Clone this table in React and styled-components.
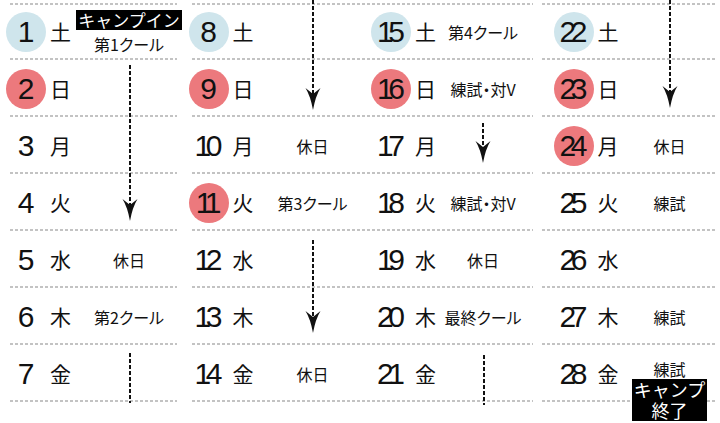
import styled, { createGlobalStyle } from 'styled-components'

const GlobalStyle = createGlobalStyle`
	html, body {
		margin: 0;
		padding: 0;
		background: #fff;
	}
	body {
		width: 720px;
		height: 423px;
		overflow: hidden;
		font-family: "Noto Sans CJK JP", "Noto Sans", sans-serif;
		color: #111;
	}
`

/* data */
const weeks = [
	{
		lines: [10, 5.5],
		center: 129,
		arrows: [
			{ x: 130, top: 65, h: 156, head: true },
			{ x: 130, top: 353, h: 50 },
		],
		days: [
			{ n: 1, w: '土', tone: 'sat', tag: 'キャンプイン', note: '第1クール' },
			{ n: 2, w: '日', tone: 'sun' },
			{ n: 3, w: '月' },
			{ n: 4, w: '火' },
			{ n: 5, w: '水', note: '休日' },
			{ n: 6, w: '木', note: '第2クール' },
			{ n: 7, w: '金' },
		],
	},
	{
		lines: [9.5, 5],
		center: 130,
		arrows: [
			{ x: 130.5, top: 0, h: 110, head: true },
			{ x: 130.5, top: 240, h: 93, head: true },
		],
		days: [
			{ n: 8, w: '土', tone: 'sat' },
			{ n: 9, w: '日', tone: 'sun' },
			{ n: 10, w: '月', note: '休日' },
			{ n: 11, w: '火', tone: 'sun', note: '第3クール' },
			{ n: 12, w: '水' },
			{ n: 13, w: '木' },
			{ n: 14, w: '金', note: '休日' },
		],
	},
	{
		lines: [-3, 14.5],
		center: 118,
		arrows: [
			{ x: 118, top: 123, h: 40, head: true },
			{ x: 119, top: 355, h: 50 },
		],
		days: [
			{ n: 15, w: '土', tone: 'sat', note: '第4クール' },
			{ n: 16, w: '日', tone: 'sun', note: '練試・対V' },
			{ n: 17, w: '月' },
			{ n: 18, w: '火', note: '練試・対V' },
			{ n: 19, w: '水', note: '休日' },
			{ n: 20, w: '木', note: '最終クール' },
			{ n: 21, w: '金' },
		],
	},
	{
		lines: [-5.5, 13],
		center: 122,
		arrows: [{ x: 122.5, top: 0, h: 108, head: true }],
		days: [
			{ n: 22, w: '土', tone: 'sat' },
			{ n: 23, w: '日', tone: 'sun' },
			{ n: 24, w: '月', tone: 'sun', note: '休日' },
			{ n: 25, w: '火', note: '練試' },
			{ n: 26, w: '水' },
			{ n: 27, w: '木', note: '練試' },
			{ n: 28, w: '金', note: '練試', endTag: ['キャンプ', '終了'] },
		],
	},
]

const Arrow = ({ x, top, h, head }) => (
	<ArrowSvg $x={x} $top={top} width="16" height={h} viewBox={`0 0 16 ${h}`}>
		<line x1="8" y1="0" x2="8" y2={head ? h - 8 : h} stroke="#111" strokeWidth="2" strokeDasharray="4 2" />
		{head && (
			<path
				d={`M8 ${h} Q5.5 ${h - 14} 0.5 ${h - 22} L8 ${h - 16} L15.5 ${h - 22} Q10.5 ${h - 14} 8 ${h} Z`}
				fill="#111"
			/>
		)}
	</ArrowSvg>
)

/*START*/
const App = () => {
	return (
		<>
			<GlobalStyle />
			<Calendar>
				{weeks.map((wk) => (
					<Week key={wk.days[0].n}>
						{wk.days.map((d) => (
							<Row key={d.n} $l={wk.lines[0]} $r={wk.lines[1]}>
								<Num $tone={d.tone} $shift={6 - wk.lines[0]}>
									<span>{d.n}</span>
								</Num>
								<Weekday>{d.w}</Weekday>
								<Note $w={2 * (wk.center - 72)} $hang={!!d.endTag}>
									{d.tag && <Tag $size={17}>{d.tag}</Tag>}
									{d.note && <NoteText>{d.note}</NoteText>}
									{d.endTag && (
										<Tag $size={18} $lh={21}>
											{d.endTag[0]}
											<br />
											{d.endTag[1]}
										</Tag>
									)}
								</Note>
							</Row>
						))}
						{wk.arrows.map((a, i) => (
							<Arrow key={i} {...a} />
						))}
					</Week>
				))}
			</Calendar>
		</>
	)
}

/*Style*/
const dash = 'repeating-linear-gradient(90deg, #c3c3c3 0 3px, transparent 3px 5px)'

const Calendar = styled.div`
	display: grid;
	grid-template-columns: repeat(4, 182.5px);
	width: 730px;
`

const Week = styled.div`
	position: relative;
	padding-top: 3px;
`

const Row = styled.div`
	height: 57px;
	display: flex;
	align-items: center;
	margin: 0 ${(p) => p.$r}px 0 ${(p) => p.$l}px;
	background: ${dash} left bottom / 100% 2px no-repeat;

	&:first-child {
		background: ${dash} left top / 100% 2px no-repeat, ${dash} left bottom / 100% 2px no-repeat;
	}
`

const toneColors = {
	sat: '#cfe5ec',
	sun: '#ec797d',
}

const Num = styled.div`
	flex: none;
	width: 40px;
	height: 40px;
	margin-left: ${(p) => p.$shift}px;
	border-radius: 50%;
	background: ${(p) => toneColors[p.$tone] || 'transparent'};
	display: flex;
	align-items: center;
	justify-content: center;

	span {
		font-family: "Liberation Sans", Arial, sans-serif;
		font-size: 30px;
		line-height: 1;
		letter-spacing: -5.5px;
		padding-right: 5.5px;
		color: #111;
	}
`

const Weekday = styled.div`
	flex: none;
	width: 22px;
	margin-left: 4px;
	font-size: 21px;
	line-height: 1;
`

const Note = styled.div`
	flex: none;
	width: ${(p) => p.$w}px;
	display: flex;
	flex-direction: column;
	align-items: center;
	gap: ${(p) => (p.$hang ? 0 : 4)}px;
	margin-bottom: ${(p) => (p.$hang ? -32 : 0)}px;
`

const NoteText = styled.div`
	font-size: 16px;
	line-height: 20px;
	font-feature-settings: "palt";
	white-space: nowrap;
`

const Tag = styled.div`
	background: #000;
	color: #fff;
	font-size: ${(p) => p.$size}px;
	line-height: ${(p) => p.$lh || 20}px;
	padding: 0 2px;
	text-align: center;
	white-space: nowrap;
`

const ArrowSvg = styled.svg`
	position: absolute;
	left: ${(p) => p.$x - 8}px;
	top: ${(p) => p.$top}px;
	overflow: visible;
`

export default App
